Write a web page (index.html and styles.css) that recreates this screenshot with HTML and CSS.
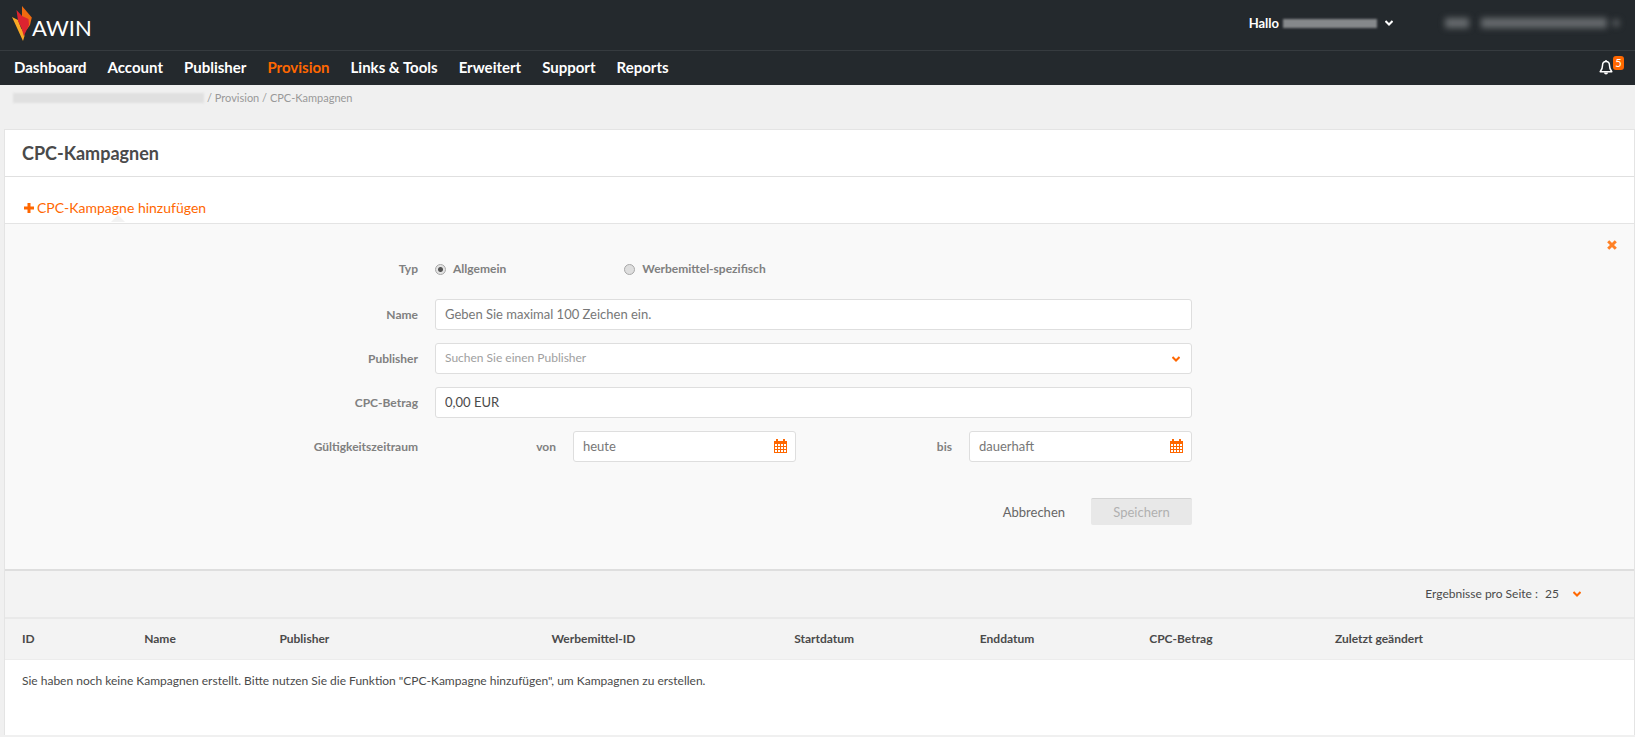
FILE: index.html
```html
<!DOCTYPE html>
<html lang="de">
<head>
    <meta charset="UTF-8">
    <meta name="viewport" content="width=device-width, initial-scale=1.0">
    <title>CPC-Kampagnen</title>
    <link rel="stylesheet" href="styles.css">
</head>
<body>

    <!-- Kopfbereich -->
    <header class="header">
        <div class="topbar">
            <a href="#" class="logo" aria-label="AWIN">
                <svg class="flame" width="20" height="36" viewBox="0 0 20 36">
                    <path fill="#f9a825" d="M0 11 L6 14 L9 22 L12 27 L12.500 30 L11 35 Z"/>
                    <path fill="#ef6a10" d="M10 0 L19.800 11.500 L18 19 L14.500 24 L10 12 Z"/>
                    <path fill="#dc2430" d="M4.500 4 L10 10 L16.500 13 L17 19 L11.800 30 L9.500 22 L6 15 Z"/>
                </svg>
                <span class="logo-text">AWIN</span>
            </a>
            <div class="account">
                <button type="button" class="user-menu">
                    Hallo <span class="masked masked-user"></span>
                    <svg width="8" height="6" viewBox="0 0 8 6"><path d="M0.500 1 L4 4.500 L7.500 1" fill="none" stroke="currentColor" stroke-width="2"/></svg>
                </button>
                <button type="button" class="account-menu" aria-label="Konto">
                    <span class="masked masked-word short"></span>
                    <span class="masked masked-word long"></span>
                    <span class="masked masked-word mini"></span>
                </button>
            </div>
        </div>
        <nav class="nav">
            <a href="#">Dashboard</a>
            <a href="#">Account</a>
            <a href="#">Publisher</a>
            <a href="#" class="active">Provision</a>
            <a href="#">Links &amp; Tools</a>
            <a href="#">Erweitert</a>
            <a href="#">Support</a>
            <a href="#">Reports</a>
            <button type="button" class="bell" aria-label="Benachrichtigungen">
                <svg width="14" height="15" viewBox="0 0 14 15">
                    <path d="M7 1.500 C4.300 1.500 3.500 3.500 3.500 5.500 C3.500 9 2.500 10 1.200 11.700 L12.800 11.700 C11.500 10 10.500 9 10.500 5.500 C10.500 3.500 9.700 1.500 7 1.500 Z" fill="none" stroke="#fff" stroke-width="1.500" stroke-linejoin="round"/>
                    <path d="M5 12.500 H9 A2 2 0 0 1 5 12.500 Z M6.300 0 H7.700 V2 H6.300 Z" fill="#fff"/>
                </svg>
                <span class="badge">5</span>
            </button>
        </nav>
    </header>

    <div class="breadcrumb">
        <span class="masked masked-crumb"></span>
        <span>/ <a href="#">Provision</a> / <a href="#">CPC-Kampagnen</a></span>
    </div>

    <main class="card">
        <h1>CPC-Kampagnen</h1>

        <div class="add-bar">
            <a href="#" class="add-link">
                <svg width="10" height="10" viewBox="0 0 10 10"><path d="M5 0 V10 M0 5 H10" stroke="currentColor" stroke-width="3"/></svg>
                CPC-Kampagne hinzufügen
            </a>
        </div>

        <!-- Formular -->
        <form class="campaign-form">
            <button type="button" class="close" aria-label="Schließen">
                <svg width="10" height="10" viewBox="0 0 10 10"><path d="M1.200 1.200 L8.800 8.800 M8.800 1.200 L1.200 8.800" stroke="currentColor" stroke-width="3"/></svg>
            </button>

            <div class="row row-type">
                <span class="label">Typ</span>
                <div class="radios">
                    <label><input type="radio" name="typ" checked>Allgemein</label>
                    <label><input type="radio" name="typ">Werbemittel-spezifisch</label>
                </div>
            </div>

            <div class="row">
                <label class="label" for="name">Name</label>
                <input type="text" id="name" class="field" placeholder="Geben Sie maximal 100 Zeichen ein.">
            </div>

            <div class="row">
                <label class="label" for="publisher">Publisher</label>
                <div class="with-icon">
                    <select id="publisher" class="field muted">
                        <option>Suchen Sie einen Publisher</option>
                    </select>
                    <svg class="arrow" width="8" height="6" viewBox="0 0 8 6"><path d="M0.500 1 L4 4.500 L7.500 1" fill="none" stroke="currentColor" stroke-width="2"/></svg>
                </div>
            </div>

            <div class="row">
                <label class="label" for="betrag">CPC-Betrag</label>
                <input type="text" id="betrag" class="field" value="0,00 EUR">
            </div>

            <div class="row">
                <span class="label">Gültigkeitszeitraum</span>
                <div class="dates">
                    <label class="label" for="von">von</label>
                    <div class="with-icon">
                        <input type="text" id="von" class="field" placeholder="heute">
                        <svg class="calendar" width="13" height="14" viewBox="0 0 13 14">
                            <path fill="currentColor" fill-rule="evenodd" d="M0 2 H2 V0 H4 V2 H9 V0 H11 V2 H13 V14 H0 Z M1 5 V7 H3 V5 Z M4 5 V7 H6 V5 Z M7 5 V7 H9 V5 Z M10 5 V7 H12 V5 Z M1 8 V10 H3 V8 Z M4 8 V10 H6 V8 Z M7 8 V10 H9 V8 Z M10 8 V10 H12 V8 Z M1 11 V13 H3 V11 Z M4 11 V13 H6 V11 Z M7 11 V13 H9 V11 Z M10 11 V13 H12 V11 Z"/>
                        </svg>
                    </div>
                    <label class="label" for="bis">bis</label>
                    <div class="with-icon">
                        <input type="text" id="bis" class="field" placeholder="dauerhaft">
                        <svg class="calendar" width="13" height="14" viewBox="0 0 13 14">
                            <path fill="currentColor" fill-rule="evenodd" d="M0 2 H2 V0 H4 V2 H9 V0 H11 V2 H13 V14 H0 Z M1 5 V7 H3 V5 Z M4 5 V7 H6 V5 Z M7 5 V7 H9 V5 Z M10 5 V7 H12 V5 Z M1 8 V10 H3 V8 Z M4 8 V10 H6 V8 Z M7 8 V10 H9 V8 Z M10 8 V10 H12 V8 Z M1 11 V13 H3 V11 Z M4 11 V13 H6 V11 Z M7 11 V13 H9 V11 Z M10 11 V13 H12 V11 Z"/>
                        </svg>
                    </div>
                </div>
            </div>

            <div class="row row-actions">
                <div class="actions">
                    <button type="button" class="cancel">Abbrechen</button>
                    <button type="submit" class="save" disabled>Speichern</button>
                </div>
            </div>
        </form>

        <!-- Ergebnisse pro Seite -->
        <div class="pager">
            <label for="per-page">Ergebnisse pro Seite :</label>
            <div class="with-icon">
                <select id="per-page">
                    <option>25</option>
                </select>
                <svg class="arrow" width="8" height="6" viewBox="0 0 8 6"><path d="M0.500 1 L4 4.500 L7.500 1" fill="none" stroke="currentColor" stroke-width="2"/></svg>
            </div>
        </div>

        <table class="campaigns">
            <colgroup>
                <col class="c-id">
                <col class="c-name">
                <col class="c-publisher">
                <col class="c-media">
                <col class="c-start">
                <col class="c-end">
                <col class="c-amount">
                <col>
            </colgroup>
            <thead>
                <tr>
                    <th>ID</th>
                    <th>Name</th>
                    <th>Publisher</th>
                    <th>Werbemittel-ID</th>
                    <th>Startdatum</th>
                    <th>Enddatum</th>
                    <th>CPC-Betrag</th>
                    <th>Zuletzt geändert</th>
                </tr>
            </thead>
            <tbody>
                <tr>
                    <td colspan="8">Sie haben noch keine Kampagnen erstellt. Bitte nutzen Sie die Funktion "CPC-Kampagne hinzufügen", um Kampagnen zu erstellen.</td>
                </tr>
            </tbody>
        </table>
    </main>

</body>
</html>
```
FILE: styles.css
```css
* {
    box-sizing: border-box;
}

body {
    margin: 0;
    font-family: Lato, "Noto Sans", sans-serif;
    font-size: 12px;
    line-height: 16px;
    color: #4a4a4a;
    background-color: #f0f0f0;
}

a {
    color: inherit;
    text-decoration: none;
}

button,
input,
select {
    font-family: inherit;
    font-size: inherit;
    line-height: inherit;
}

button {
    padding: 0;
    border: none;
    background: none;
    color: inherit;
}

svg {
    display: block;
}

/* Kopfbereich */
.header {
    background-color: #24292d;
    color: #fff;
}

.topbar {
    display: flex;
    justify-content: space-between;
    height: 51px;
    padding: 0 16px 0 12px;
    border-bottom: 1px solid #363b3f;
}

.logo {
    display: flex;
    padding-top: 6px;
}

.logo-text {
    padding-top: 10px;
    font-size: 22px;
    line-height: 24px;
}

.account {
    display: flex;
    align-items: center;
    gap: 52px;
    height: 46px;
}

.user-menu,
.account-menu {
    display: flex;
    align-items: center;
    font-size: 13px;
    font-weight: 700;
}

/* unkenntlich gemachte Namen */
.masked {
    display: block;
    filter: blur(1px);
}

.masked-user {
    width: 94px;
    height: 9px;
    margin: 0 8px 0 4px;
    background-color: #85888b;
}

.account-menu {
    gap: 12px;
}

.masked-word {
    height: 10px;
    background-color: #676b6e;
    filter: blur(3px);
}

.short {
    width: 24px;
}

.long {
    width: 126px;
}

.mini {
    width: 6px;
    height: 6px;
    margin-left: -6px;
}

.masked-crumb {
    width: 191px;
    height: 10px;
    background-color: #e0e0e0;
}

.nav {
    display: flex;
    align-items: center;
    gap: 21px;
    height: 34px;
    padding: 0 11px 2px 14px;
    font-size: 15px;
    font-weight: 700;
}

.nav .active {
    color: #ff6700;
}

.bell {
    display: flex;
    align-items: center;
    margin-left: auto;
}

.badge {
    width: 11px;
    margin-bottom: 8px;
    border-radius: 3px;
    background-color: #ff6700;
    font-size: 11px;
    line-height: 14px;
    text-align: center;
}

.breadcrumb {
    display: flex;
    align-items: center;
    gap: 3px;
    height: 44px;
    padding: 0 13px 18px;
    font-size: 11px;
    color: #999;
}

/* Inhalt */
.card {
    margin: 0 0 2px 4px;
    border: 1px solid #e4e4e4;
    border-bottom: none;
    background-color: #fff;
}

h1 {
    margin: 0;
    padding: 11px 17px;
    border-bottom: 1px solid #e0e0e0;
    font-size: 18px;
    font-weight: 700;
    line-height: 24px;
}

.add-bar {
    padding: 21px 19px 5px;
    border-bottom: 1px solid #e4e4e4;
}

.add-link {
    display: inline-flex;
    position: relative;
    align-items: center;
    gap: 3px;
    font-size: 14px;
    line-height: 20px;
    color: #ff6700;
}

.add-link::after {
    content: "";
    position: absolute;
    left: 48%;
    bottom: -4px;
    border: 7px solid transparent;
    border-top: none;
    border-bottom-color: #f2f2f2;
}

.campaign-form {
    position: relative;
    display: flex;
    flex-direction: column;
    gap: 13px;
    padding: 37px 0 44px;
    border-bottom: 2px solid #dedede;
    background-color: #f9f9f9;
}

.close {
    position: absolute;
    top: 16px;
    right: 17px;
    color: #ff8126;
}

.row {
    display: grid;
    grid-template-columns: 413fr 757fr 425fr;
    column-gap: 17px;
    align-items: center;
}

.row-type {
    padding-bottom: 9px;
}

.label {
    font-weight: 700;
    color: #808080;
    text-align: right;
}

.radios {
    display: grid;
    grid-template-columns: 1fr 3fr;
}

.radios label {
    display: flex;
    align-items: center;
    gap: 7px;
    font-weight: 700;
    color: #808080;
}

.radios input {
    appearance: none;
    width: 11px;
    height: 11px;
    margin: 0;
    border: 1px solid #a8a8a8;
    border-radius: 50%;
    background-color: #dedede;
}

.radios input:checked {
    background: radial-gradient(circle, #555 0 2px, #e4e4e4 3px);
}

.field {
    display: block;
    width: 100%;
    height: 31px;
    padding: 0 9px 2px;
    border: 1px solid #dedede;
    border-radius: 3px;
    background-color: #fff;
    font-size: 13px;
    color: #4a4a4a;
}

.field::placeholder {
    color: #777;
    opacity: 1;
}

select {
    appearance: none;
}

.muted {
    font-size: 12px;
    color: #a0a0a0;
}

.with-icon {
    position: relative;
}

.arrow,
.calendar {
    position: absolute;
    top: 50%;
    right: 12px;
    transform: translateY(-50%);
    color: #ff6700;
    pointer-events: none;
}

/* halbe Pixel vermeiden: 31px Feld, 14px Symbol */
.calendar {
    top: 8px;
    right: 9px;
    transform: none;
}

.dates {
    display: grid;
    grid-template-columns: 121fr 223fr 139fr 223fr;
    column-gap: 17px;
    align-items: center;
}

.row-actions {
    padding-top: 23px;
}

.actions {
    display: flex;
    grid-column: 2;
    justify-content: flex-end;
    gap: 26px;
    font-size: 13px;
}

.cancel {
    color: #666;
}

.save {
    width: 101px;
    height: 27px;
    border-top: 1px solid #d4d4d4;
    border-radius: 2px;
    background-color: #e8e8e8;
    color: #b0b0b0;
}

.pager {
    display: flex;
    align-items: center;
    justify-content: flex-end;
    gap: 7px;
    height: 48px;
    padding-right: 41px;
    border-bottom: 2px solid #e9e9e9;
    background-color: #f3f3f3;
}

.pager select {
    display: block;
    width: 48px;
    padding: 0;
    border: none;
    background: none;
    color: inherit;
}

/* Tabelle */
.campaigns {
    width: 100%;
    table-layout: fixed;
    border-collapse: collapse;
}

.c-id { width: 7.5%; }
.c-name { width: 8.3%; }
.c-publisher { width: 16.7%; }
.c-media { width: 14.9%; }
.c-start { width: 11.4%; }
.c-end { width: 10.4%; }
.c-amount { width: 11.4%; }

.campaigns th,
.campaigns td {
    padding: 12px 17px;
    text-align: left;
}

.campaigns th {
    border-bottom: 1px solid #ececec;
    background-color: #f3f3f3;
    font-weight: 700;
}

.campaigns td {
    padding: 13px 17px 46px;
}
```
